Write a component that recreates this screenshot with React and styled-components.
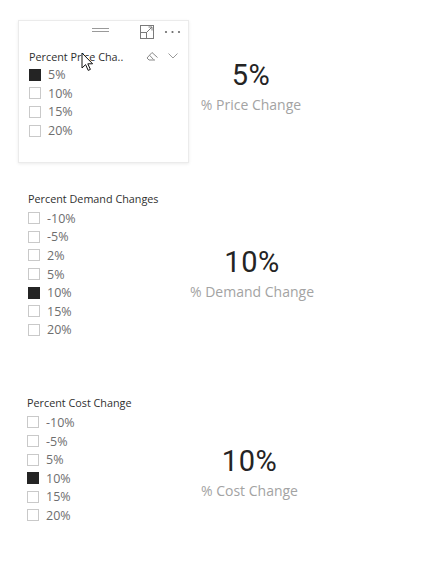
import React from "react";
import styled, { createGlobalStyle } from "styled-components";

const GlobalStyle = createGlobalStyle`
  html, body {
    margin: 0;
    padding: 0;
    background: #ffffff;
  }
  body {
    font-family: "Open Sans", "Noto Sans", Arial, sans-serif;
  }
`;

const Page = styled.div`
  width: 426px;
  height: 571px;
  display: flex;
  flex-direction: column;
  padding-left: 18px;
  box-sizing: border-box;
  overflow: hidden;
`;

const Row = styled.div`
  display: grid;
  grid-template-columns: 171px 124px;
  align-items: start;
  margin-top: ${({ top }) => top}px;
`;

const SlicerBox = styled.div`
  position: relative;
  box-sizing: border-box;
  width: 171px;
  height: ${({ framed }) => (framed ? "143px" : "auto")};
  padding: 0 7px 0 ${({ indent }) => indent}px;
  border: 1px solid ${({ framed }) => (framed ? "#ebebeb" : "transparent")};
  box-shadow: ${({ framed }) => (framed ? "0 1px 3px rgba(0,0,0,0.08)" : "none")};
`;

const Header = styled.div`
  display: grid;
  grid-template-columns: 1fr auto 1fr;
  align-items: center;
  height: 21px;
  margin-left: -10px;
  margin-bottom: 4.5px;
`;

const Handle = styled.div`
  grid-column: 2;
  width: 17px;
  height: 4px;
  border-top: 1px solid #9a9a9a;
  border-bottom: 1px solid #9a9a9a;
  box-sizing: border-box;
  margin-top: -3px;
`;

const HeaderIcons = styled.div`
  grid-column: 3;
  display: flex;
  justify-content: flex-end;
  align-items: center;
  gap: 10px;
`;

const Title = styled.div`
  display: flex;
  align-items: center;
  height: ${({ h }) => h || 19}px;
  font-size: 10.8px;
  color: #2f2f2f;
  white-space: nowrap;
`;

const TitleText = styled.span`
  flex: 1;
`;

const TitleIcons = styled.div`
  display: flex;
  align-items: center;
  gap: 9px;
  padding-right: 3px;
`;

const Item = styled.div`
  display: flex;
  align-items: center;
  gap: 7px;
  height: 18.6px;
  font-size: 12.5px;
  color: #6e6e6e;
`;

const Box = styled.span`
  width: 12px;
  height: 12px;
  box-sizing: border-box;
  border: 1px solid ${({ checked }) => (checked ? "#242424" : "#c9c9c9")};
  background: ${({ checked }) => (checked ? "#242424" : "#ffffff")};
`;

const Card = styled.div`
  display: flex;
  flex-direction: column;
  align-items: center;
  padding-top: ${({ top }) => top}px;
  margin-left: ${({ dx }) => dx}px;
  white-space: nowrap;
`;

const Number = styled.div`
  font-family: Roboto, "DejaVu Sans", sans-serif;
  font-size: 29px;
  line-height: 32px;
  color: #242424;
  letter-spacing: 0.5px;
`;

const Label = styled.div`
  margin-top: 5px;
  font-size: 14px;
  line-height: 18px;
  color: #a3a3a3;
`;

const Cursor = styled.svg`
  position: absolute;
  left: 62px;
  top: 31px;
`;

const FocusIcon = () => (
  <svg width="15" height="14" viewBox="0 0 15 14" fill="none" stroke="#7a7a7a" strokeWidth="1">
    <rect x="1.5" y="0.5" width="13" height="13" />
    <rect x="1.5" y="7.5" width="6" height="6" />
    <path d="M7.5 7.5 L13 2 M9.5 2 H13 V5.5" />
  </svg>
);

const DotsIcon = () => (
  <svg width="17" height="4" viewBox="0 0 17 4" fill="#6a6a6a">
    <circle cx="2" cy="2" r="1.1" />
    <circle cx="8.5" cy="2" r="1.1" />
    <circle cx="15" cy="2" r="1.1" />
  </svg>
);

const EraserIcon = () => (
  <svg width="14" height="10" viewBox="0 0 14 10" fill="none" stroke="#8a8a8a" strokeWidth="1">
    <path d="M2 7 L7 1.5 L12.5 6.5" />
    <path d="M2 7 L4 9 H10" />
    <path d="M4.5 4.2 L8.5 8.5" />
  </svg>
);

const ChevronIcon = () => (
  <svg width="10" height="6" viewBox="0 0 10 6" fill="none" stroke="#9a9a9a" strokeWidth="1">
    <path d="M0.5 0.5 L5 5 L9.5 0.5" />
  </svg>
);

const slicers = [
  {
    title: "Percent Price Cha..",
    items: ["5%", "10%", "15%", "20%"],
    picked: "5%",
    value: "5%",
    label: "% Price Change",
  },
  {
    title: "Percent Demand Changes",
    items: ["-10%", "-5%", "2%", "5%", "10%", "15%", "20%"],
    picked: "10%",
    value: "10%",
    label: "% Demand Change",
  },
  {
    title: "Percent Cost Change",
    items: ["-10%", "-5%", "5%", "10%", "15%", "20%"],
    picked: "10%",
    value: "10%",
    label: "% Cost Change",
  },
];

const Items = ({ slicer }) =>
  slicer.items.map((it) => (
    <Item key={it}>
      <Box checked={it === slicer.picked} />
      {it}
    </Item>
  ));

export default function App() {
  const [price, demand, cost] = slicers;
  return (
    <>
      <GlobalStyle />
      <Page>
        <Row top={20}>
          <SlicerBox framed indent={10}>
            <Header>
              <Handle />
              <HeaderIcons>
                <FocusIcon />
                <DotsIcon />
              </HeaderIcons>
            </Header>
            <Title>
              <TitleText>{price.title}</TitleText>
              <TitleIcons>
                <EraserIcon />
                <ChevronIcon />
              </TitleIcons>
            </Title>
            <Items slicer={price} />
            <Cursor width="13" height="20" viewBox="0 0 13 20">
              <path
                d="M1 1 L1 16 L4.6 12.6 L7.2 18.4 L9.4 17.4 L6.8 11.8 L11.6 11.8 Z"
                fill="#ffffff"
                stroke="#111111"
                strokeWidth="1"
                strokeLinejoin="round"
              />
            </Cursor>
          </SlicerBox>
          <Card top={39} dx={0}>
            <Number>{price.value}</Number>
            <Label>{price.label}</Label>
          </Card>
        </Row>

        <Row top={24}>
          <SlicerBox indent={9}>
            <Title h={21}>{demand.title}</Title>
            <Items slicer={demand} />
          </SlicerBox>
          <Card top={59} dx={2}>
            <Number>{demand.value}</Number>
            <Label>{demand.label}</Label>
          </Card>
        </Row>

        <Row top={51}>
          <SlicerBox indent={8}>
            <Title h={21}>{cost.title}</Title>
            <Items slicer={cost} />
          </SlicerBox>
          <Card top={54} dx={-3}>
            <Number>{cost.value}</Number>
            <Label>{cost.label}</Label>
          </Card>
        </Row>
      </Page>
    </>
  );
}
